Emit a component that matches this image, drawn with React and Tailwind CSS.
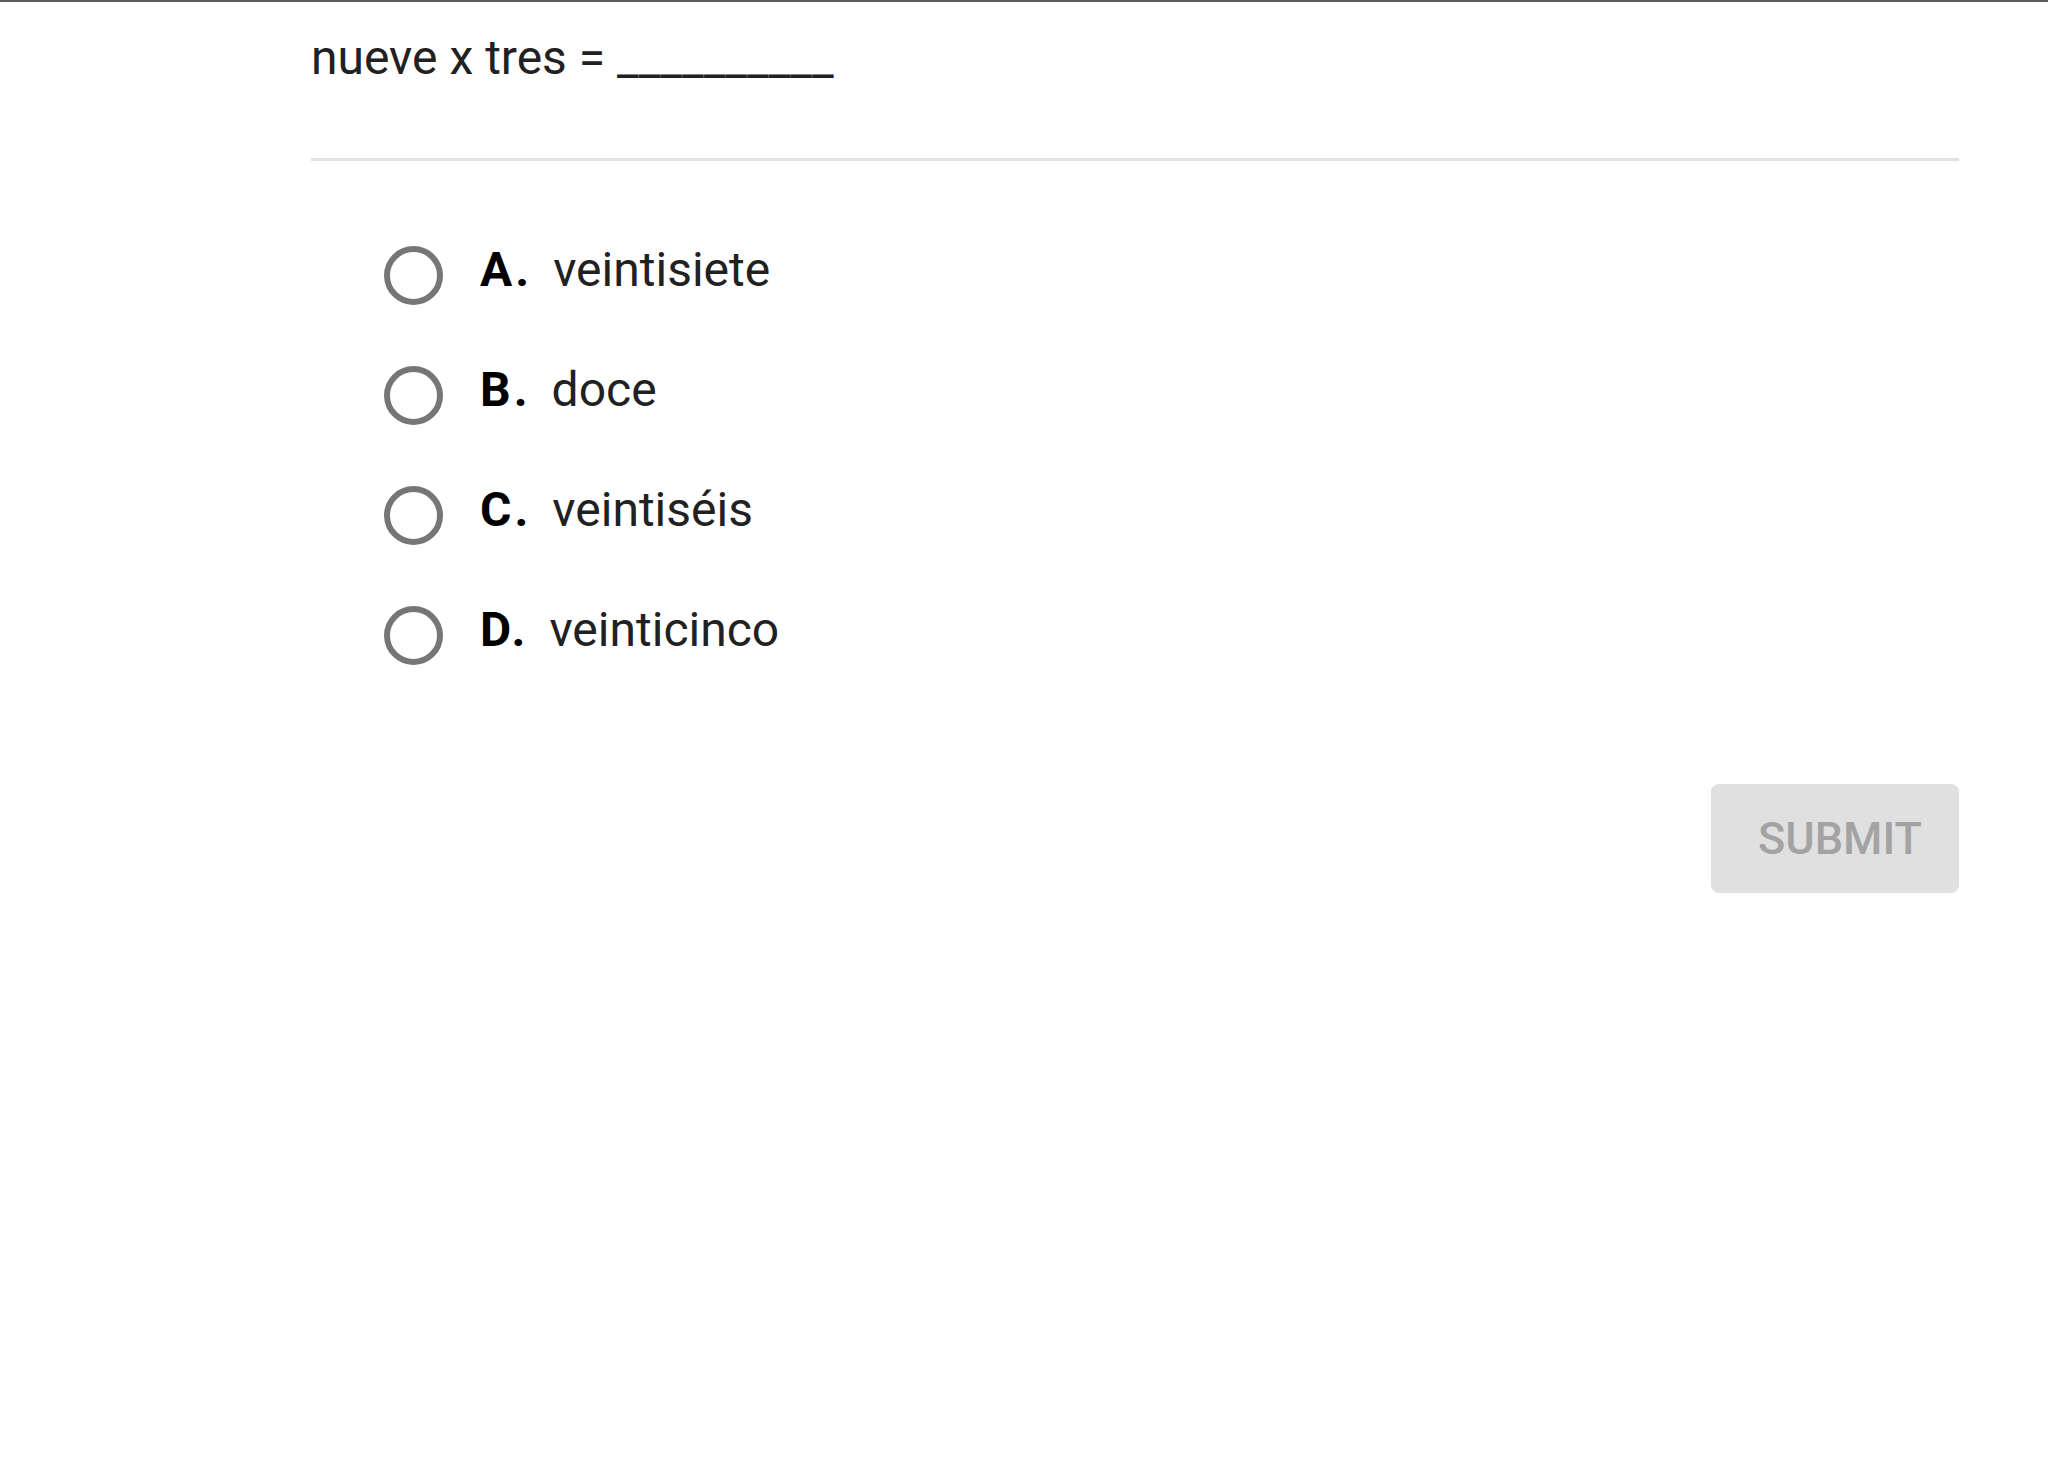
const options = [
  { letter: "A", text: "veintisiete" },
  { letter: "B", text: "doce" },
  { letter: "C", text: "veintiséis" },
  { letter: "D", text: "veinticinco" },
];

const Option = ({ letter, text }) => (
  <label className="flex items-center h-[120px] cursor-pointer">
    <span className="mt-[10px] w-[59px] h-[59px] rounded-full border-[6px] border-[#767676] flex-shrink-0"></span>
    <span className="ml-[37px] flex items-center text-[48px] leading-[56px]">
      <span className="font-bold text-black tracking-[3px]">{letter}.</span>
      <span className="ml-[21px] text-[#212121]">{text}</span>
    </span>
  </label>
);

export default function App() {
  return (
    <div className="min-h-screen bg-white border-t-2 border-[#5a5a5a]" style={{ fontFamily: "Roboto, 'Noto Sans', sans-serif" }}>
      <div className="ml-[311px] w-[1648px]">
        <p className="pt-[28px] text-[48px] leading-[56px] text-[#212121]">
          nueve x tres = __________
        </p>
        <div className="mt-[72px] h-[3px] bg-[#e2e2e2]"></div>

        <div className="mt-[49px] pl-[73px]">
          {options.map((o) => (
            <Option key={o.letter} {...o} />
          ))}
        </div>

        <div className="mt-[94px] flex justify-end">
          <button
            disabled
            className="w-[248px] h-[109px] rounded-[8px] bg-[#e0e0e0] text-[#a3a3a3] text-[45px] font-medium pl-[10px]"
          >
            SUBMIT
          </button>
        </div>
      </div>
    </div>
  );
}
